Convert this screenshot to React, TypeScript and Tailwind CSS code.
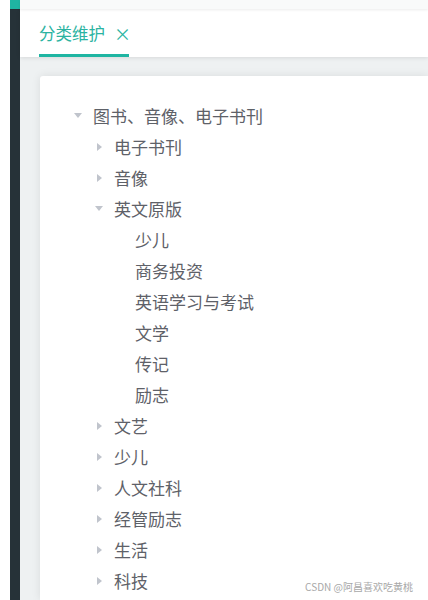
import React from 'react';

type Node = { label: string; level: 0 | 1 | 2; arrow?: 'open' | 'closed' };

const nodes: Node[] = [
  { label: '图书、音像、电子书刊', level: 0, arrow: 'open' },
  { label: '电子书刊', level: 1, arrow: 'closed' },
  { label: '音像', level: 1, arrow: 'closed' },
  { label: '英文原版', level: 1, arrow: 'open' },
  { label: '少儿', level: 2 },
  { label: '商务投资', level: 2 },
  { label: '英语学习与考试', level: 2 },
  { label: '文学', level: 2 },
  { label: '传记', level: 2 },
  { label: '励志', level: 2 },
  { label: '文艺', level: 1, arrow: 'closed' },
  { label: '少儿', level: 1, arrow: 'closed' },
  { label: '人文社科', level: 1, arrow: 'closed' },
  { label: '经管励志', level: 1, arrow: 'closed' },
  { label: '生活', level: 1, arrow: 'closed' },
  { label: '科技', level: 1, arrow: 'closed' },
];

const indent = ['pl-[31px]', 'pl-[52px]', 'pl-[73px]'];

const Arrow = ({ kind }: { kind?: 'open' | 'closed' }) => {
  if (!kind) return <span className="w-[14px] shrink-0" />;
  return (
    <span className="flex w-[14px] shrink-0 items-center justify-center">
      {kind === 'open' ? (
        <span className="h-0 w-0 border-x-[4px] border-t-[5px] border-x-transparent border-t-[#c0c4cc]" />
      ) : (
        <span className="h-0 w-0 border-y-[4px] border-l-[5px] border-y-transparent border-l-[#c0c4cc]" />
      )}
    </span>
  );
};

export default function App() {
  return (
    <div
      className="flex h-[600px] w-[428px] overflow-hidden bg-white"
      style={{ fontFamily: '"Noto Sans CJK SC", "Noto Sans", sans-serif' }}
    >
      <div className="w-[10px] shrink-0 bg-white" />
      <div className="flex w-[10px] shrink-0 flex-col">
        <div className="h-[9px] bg-[#1fb5a2]" />
        <div className="flex-1 bg-[#263238]" />
      </div>

      <div className="relative flex min-w-0 flex-1 flex-col">
        <div className="z-20 h-[9px] bg-[#f9fafa] shadow-[0_1px_3px_rgba(0,0,0,0.08)]" />
        <div className="z-10 flex h-[48px] items-end bg-white pl-[19px] shadow-[0_1px_4px_rgba(0,0,0,0.1)]">
          <div className="flex h-full w-[90px] shrink-0 flex-col border-b-[3px] border-[#1fb5a2]">
            <div className="flex flex-1 items-center gap-[9px] whitespace-nowrap pt-[4px] text-[16.5px] text-[#2bb3a1]">
              <span>分类维护</span>
              <span className="text-[17px] leading-none">×</span>
            </div>
          </div>
        </div>

        <div className="flex flex-1 bg-[#eef1f2] pl-[20px] pt-[19px]">
          <div className="flex-1 rounded-tl-[3px] bg-white pt-[24px] shadow-[0_0_10px_rgba(0,0,0,0.09)]">
            {nodes.map((n, i) => (
              <div
                key={i}
                className={`flex h-[31px] items-center gap-[8px] text-[17px] text-[#5e6168] ${indent[n.level]}`}
              >
                <Arrow kind={n.arrow} />
                <span className="whitespace-nowrap leading-none">{n.label}</span>
              </div>
            ))}
          </div>
        </div>

        <div className="absolute bottom-[6px] right-[15px] whitespace-nowrap text-[10px] text-[#a8a8a8]">
          CSDN @阿昌喜欢吃黄桃
        </div>
      </div>
    </div>
  );
}
